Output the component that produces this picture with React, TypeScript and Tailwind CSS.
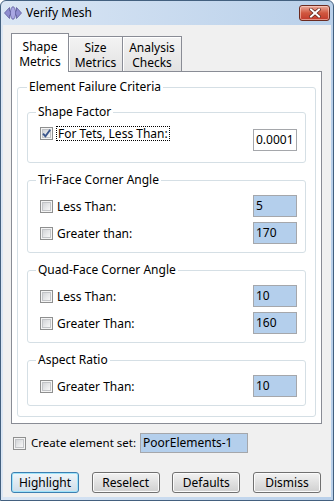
import React from 'react';

const CheckBox = ({ checked }: { checked?: boolean }) => (
  <span className="flex h-[13px] w-[13px] shrink-0 items-center justify-center border border-[#8e8f8f] bg-[#f4f4f4]">
    <span className="flex h-[9px] w-[9px] items-center justify-center border border-[#c2c4c7] bg-gradient-to-br from-[#d3d5d8] to-[#f7f7f7]">
      {checked && (
        <svg width="9" height="9" viewBox="0 0 9 9" className="overflow-visible">
          <path d="M1 4.6 L3.4 7.2 L8.2 0.8" fill="none" stroke="#3b568c" strokeWidth="1.9" />
        </svg>
      )}
    </span>
  </span>
);

const ValueBox = ({ value, white }: { value: string; white?: boolean }) => (
  <div
    className={
      white
        ? 'flex h-[22px] w-[44px] shrink-0 items-center border border-[#a5a7ab] bg-white px-[2px] text-[12px]'
        : 'flex h-[22px] w-[44px] shrink-0 items-center border border-[#a5a7ab] bg-[#b4cfec] px-[2px] text-[12px]'
    }
  >
    {value}
  </div>
);

const Row = ({ label, value }: { label: string; value: string }) => (
  <div className="flex h-[22px] items-center">
    <CheckBox />
    <span className="ml-[4px] whitespace-nowrap leading-[15px]">{label}</span>
    <div className="ml-auto">
      <ValueBox value={value} />
    </div>
  </div>
);

const Group = ({ title, children }: { title: string; children: React.ReactNode }) => (
  <fieldset className="rounded-[3px] border border-[#d5dfe5] pl-[8px] pr-[8px] pt-[7px] pb-[8px]">
    <legend className="whitespace-nowrap px-[2px] leading-[16px]">{title}</legend>
    <div className="flex flex-col gap-[5px] pl-[4px]">{children}</div>
  </fieldset>
);

const Tab = ({ top, bottom, active, width }: { top: string; bottom: string; active?: boolean; width: string }) =>
  active ? (
    <div className={`relative z-10 flex h-[39px] items-center justify-center border border-b-0 border-[#898c95] bg-white pt-[1px] text-center leading-[15px] ${width}`}>
      <span>
        {top}
        <br />
        {bottom}
      </span>
    </div>
  ) : (
    <div className={`-ml-px flex h-[36px] items-center justify-center border border-b-0 border-[#898c95] bg-gradient-to-b from-[#f3f3f3] to-[#e2e2e2] text-center leading-[15px] shadow-[inset_1px_1px_0_#fff] ${width}`}>
      <span>
        {top}
        <br />
        {bottom}
      </span>
    </div>
  );

const Button = ({ label, primary }: { label: string; primary?: boolean }) => (
  <div
    className={
      primary
        ? 'flex h-[21px] w-[68px] items-center justify-center rounded-[3px] border border-[#3c7fb1] bg-gradient-to-b from-[#f0f6fa] to-[#cfdde8] shadow-[inset_0_0_0_1px_#9fe3fa]'
        : 'flex h-[21px] w-[68px] items-center justify-center rounded-[3px] border border-[#707070] bg-gradient-to-b from-[#f2f2f2] to-[#d0d0d0] shadow-[inset_0_0_0_1px_#fbfbfb]'
    }
  >
    {label}
  </div>
);

export default function App() {
  return (
    <div className="h-[501px] w-[334px] font-['Noto_Sans',sans-serif] text-[12px] text-black">
      <div className="flex h-full flex-col rounded-t-[6px] border border-[#43607f] bg-gradient-to-r from-[#dae6f4] to-[#b9d0ea]">
        {/* title bar */}
        <div className="flex h-[24px] shrink-0 items-center pl-[3px] pr-[3px]">
          <svg width="18" height="14" viewBox="0 0 18 14">
            <path d="M0.5 7 L5.5 1.5 L5.5 5 L12.5 5 L12.5 1.5 L17.5 7 L12.5 12.5 L12.5 9 L5.5 9 L5.5 12.5 Z" fill="#8f8dd0" stroke="#5e5c9c" strokeWidth="0.8" />
            <ellipse cx="9" cy="7" rx="2.6" ry="6.3" fill="#a9a7e2" stroke="#5e5c9c" strokeWidth="0.8" />
          </svg>
          <span className="ml-[4px] text-[12px] leading-[16px]">Verify Mesh</span>
          <div className="ml-auto flex h-[16px] w-[31px] items-center justify-center rounded-[3px] border border-[#6b2a1f] bg-gradient-to-b from-[#e9a99b] via-[#d0573f] to-[#c0392b] shadow-[inset_0_0_0_1px_rgba(255,220,210,0.55)]">
            <svg width="12" height="10" viewBox="0 0 12 10">
              <path d="M2 1.5 L10 8.5 M10 1.5 L2 8.5" stroke="#5a2218" strokeWidth="3.4" strokeLinecap="square" />
              <path d="M2 1.5 L10 8.5 M10 1.5 L2 8.5" stroke="#ffffff" strokeWidth="2" strokeLinecap="square" />
            </svg>
          </div>
        </div>

        {/* client area */}
        <div className="mx-[2px] mb-[3px] flex flex-1 flex-col bg-[#f0f0f0] pt-[8px]">
          <div className="flex h-[39px] items-end pl-[8px]">
            <Tab top="Shape" bottom="Metrics" active width="w-[58px]" />
            <Tab top="Size" bottom="Metrics" width="w-[55px]" />
            <Tab top="Analysis" bottom="Checks" width="w-[60px]" />
          </div>

          <div className="-mt-px ml-[8px] w-[311px] border border-[#898c95] bg-white px-[5px] pt-[7px] pb-[6px]">
            <fieldset className="rounded-[3px] border border-[#d5dfe5] pl-[9px] pr-[9px] pt-[9px] pb-[10px]">
              <legend className="whitespace-nowrap px-[2px] leading-[16px]">Element Failure Criteria</legend>
              <div className="flex flex-col gap-[9px]">
                <fieldset className="rounded-[3px] border border-[#d5dfe5] pl-[8px] pr-[8px] pt-[6px] pb-[11px]">
                  <legend className="px-[2px] leading-[16px]">Shape Factor</legend>
                  <div className="flex items-start pl-[4px]">
                    <div className="flex h-[15px] items-center">
                      <CheckBox checked />
                      <span className="ml-[3px] whitespace-nowrap border border-dotted border-black px-[1px] leading-[13px]">For Tets, Less Than:</span>
                    </div>
                    <div className="ml-auto mt-[3px]">
                      <ValueBox value="0.0001" white />
                    </div>
                  </div>
                </fieldset>

                <Group title="Tri-Face Corner Angle">
                  <Row label="Less Than:" value="5" />
                  <Row label="Greater than:" value="170" />
                </Group>

                <Group title="Quad-Face Corner Angle">
                  <Row label="Less Than:" value="10" />
                  <Row label="Greater Than:" value="160" />
                </Group>

                <Group title="Aspect Ratio">
                  <Row label="Greater Than:" value="10" />
                </Group>
              </div>
            </fieldset>
          </div>

          <div className="mt-[9px] flex h-[20px] items-center pl-[10px]">
            <CheckBox />
            <span className="ml-[5px] w-[109px] whitespace-nowrap text-[11.5px]">Create element set:</span>
            <div className="flex h-[20px] w-[108px] items-center whitespace-nowrap border border-[#a5a7ab] bg-[#b4cfec] px-[2px]">PoorElements-1</div>
          </div>

          <div className="mt-auto flex justify-between pl-[8px] pr-[10px] pb-[4px]">
            <Button label="Highlight" primary />
            <Button label="Reselect" />
            <Button label="Defaults" />
            <Button label="Dismiss" />
          </div>
        </div>
      </div>
    </div>
  );
}
